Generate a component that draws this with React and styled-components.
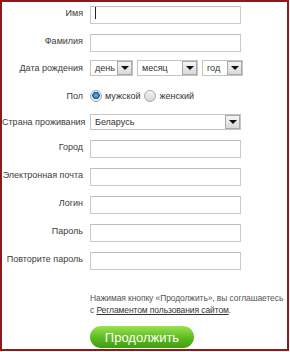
import styled, { createGlobalStyle } from "styled-components";

const GlobalStyle = createGlobalStyle`
  html, body {
    margin: 0;
    padding: 0;
    background: #ffffff;
  }
  body {
    font-family: "Liberation Sans", Arial, sans-serif;
  }
`;

const rows = [
  { label: "Имя", kind: "input", focused: true, mt: 2 },
  { label: "Фамилия", kind: "input", mt: 10 },
  { label: "Дата рождения", kind: "date", mt: 9 },
  { label: "Пол", kind: "gender", mt: 10 },
  { label: "Страна проживания", kind: "country", mt: 8 },
  { label: "Город", kind: "input", mt: 7 },
  { label: "Электронная почта", kind: "input", mt: 10 },
  { label: "Логин", kind: "input", mt: 10 },
  { label: "Пароль", kind: "input", mt: 10 },
  { label: "Повторите пароль", kind: "input", mt: 10 },
];

function Select({ value, width }) {
  return (
    <SelectBox $w={width}>
      <SelectText>{value}</SelectText>
      <ArrowBtn>
        <Triangle />
      </ArrowBtn>
    </SelectBox>
  );
}

function Control({ row }) {
  if (row.kind === "date") {
    return (
      <Controls>
        <Select value="день" width={43} />
        <Select value="месяц" width={61} />
        <Select value="год" width={41} />
      </Controls>
    );
  }
  if (row.kind === "gender") {
    return (
      <Controls>
        <Radio>
          <RadioDot $checked />
          мужской
        </Radio>
        <Radio>
          <RadioDot />
          женский
        </Radio>
      </Controls>
    );
  }
  if (row.kind === "country") {
    return <Select value="Беларусь" width={151} />;
  }
  return (
    <Field>
      <Input type="text" />
      {row.focused && <Caret />}
    </Field>
  );
}

export default function App() {
  return (
    <>
      <GlobalStyle />
      <Frame>
        {rows.map((row) => (
          <Row key={row.label} $mt={row.mt}>
            <Label>{row.label}</Label>
            <Control row={row} />
          </Row>
        ))}
        <Notice>
          Нажимая кнопку «Продолжить», вы соглашаетесь
          <br />с <NoticeLink href="#">Регламентом пользования сайтом</NoticeLink>.
        </Notice>
        <Submit type="button">Продолжить</Submit>
      </Frame>
    </>
  );
}

const Frame = styled.div`
  box-sizing: border-box;
  width: 289px;
  height: 351px;
  border: 2px solid #8b1a1a;
  display: flex;
  flex-direction: column;
  background: #ffffff;
  overflow: hidden;
`;

const Row = styled.div`
  display: flex;
  align-items: center;
  height: 18px;
  margin-top: ${(p) => p.$mt}px;
`;

const Label = styled.div`
  flex-shrink: 0;
  width: 81px;
  padding-right: 7px;
  text-align: right;
  font-size: 9px;
  color: #3c3c3c;
  white-space: nowrap;
`;

const Field = styled.div`
  position: relative;
  width: 151px;
  height: 18px;
`;

const Input = styled.input`
  box-sizing: border-box;
  width: 100%;
  height: 100%;
  margin: 0;
  padding: 0 4px;
  border: 1px solid #c9c9c9;
  border-top-color: #bdbdbd;
  background: #ffffff;
  outline: none;
  font-family: inherit;
  font-size: 9px;
`;

const Caret = styled.span`
  position: absolute;
  left: 5px;
  top: 3px;
  width: 1px;
  height: 12px;
  background: #222222;
`;

const Controls = styled.div`
  display: flex;
  align-items: center;
  gap: 3px;
`;

const SelectBox = styled.div`
  box-sizing: border-box;
  flex-shrink: 0;
  width: ${(p) => p.$w}px;
  height: 16px;
  border: 1px solid #c4c4c4;
  display: flex;
  align-items: center;
  justify-content: space-between;
  background: #ffffff;
  & + & {
    margin-left: 1px;
  }
`;

const SelectText = styled.span`
  padding-left: 4px;
  font-size: 9px;
  color: #333333;
`;

const ArrowBtn = styled.span`
  box-sizing: border-box;
  width: 15px;
  height: 14px;
  border: 1px solid #a9a9a9;
  background: linear-gradient(#f6f6f6, #d9d9d9);
  display: flex;
  align-items: center;
  justify-content: center;
`;

const Triangle = styled.span`
  width: 0;
  height: 0;
  border-left: 4px solid transparent;
  border-right: 4px solid transparent;
  border-top: 4px solid #111111;
`;

const Radio = styled.label`
  display: flex;
  align-items: center;
  gap: 3px;
  font-size: 9px;
  color: #333333;
  & + & {
    margin-left: 1px;
  }
`;

const RadioDot = styled.span`
  box-sizing: border-box;
  width: 12px;
  height: 12px;
  border-radius: 50%;
  border: 1px solid #a8a8a8;
  background: ${(p) =>
    p.$checked
      ? "radial-gradient(circle at 50% 45%, #6fc0ee 0, #1f7fc0 2.5px, #1a5e93 3.5px, #e6e6e6 4px, #f7f7f7 6px)"
      : "linear-gradient(#f2f2f2, #d6d6d6)"};
`;

const Notice = styled.div`
  margin: 24px 0 0 88px;
  font-size: 8.5px;
  letter-spacing: -0.1px;
  line-height: 12px;
  color: #555555;
  white-space: nowrap;
`;

const NoticeLink = styled.a`
  color: #333333;
  text-decoration: underline;
`;

const Submit = styled.button`
  margin: 10px 0 0 88px;
  width: 104px;
  height: 22px;
  border: none;
  border-radius: 11px;
  background: linear-gradient(#9be24f, #5cba1f 55%, #3f9d12);
  color: #ffffff;
  font-family: "Liberation Sans", Arial, sans-serif;
  font-size: 13px;
  padding: 0;
  cursor: pointer;
`;
